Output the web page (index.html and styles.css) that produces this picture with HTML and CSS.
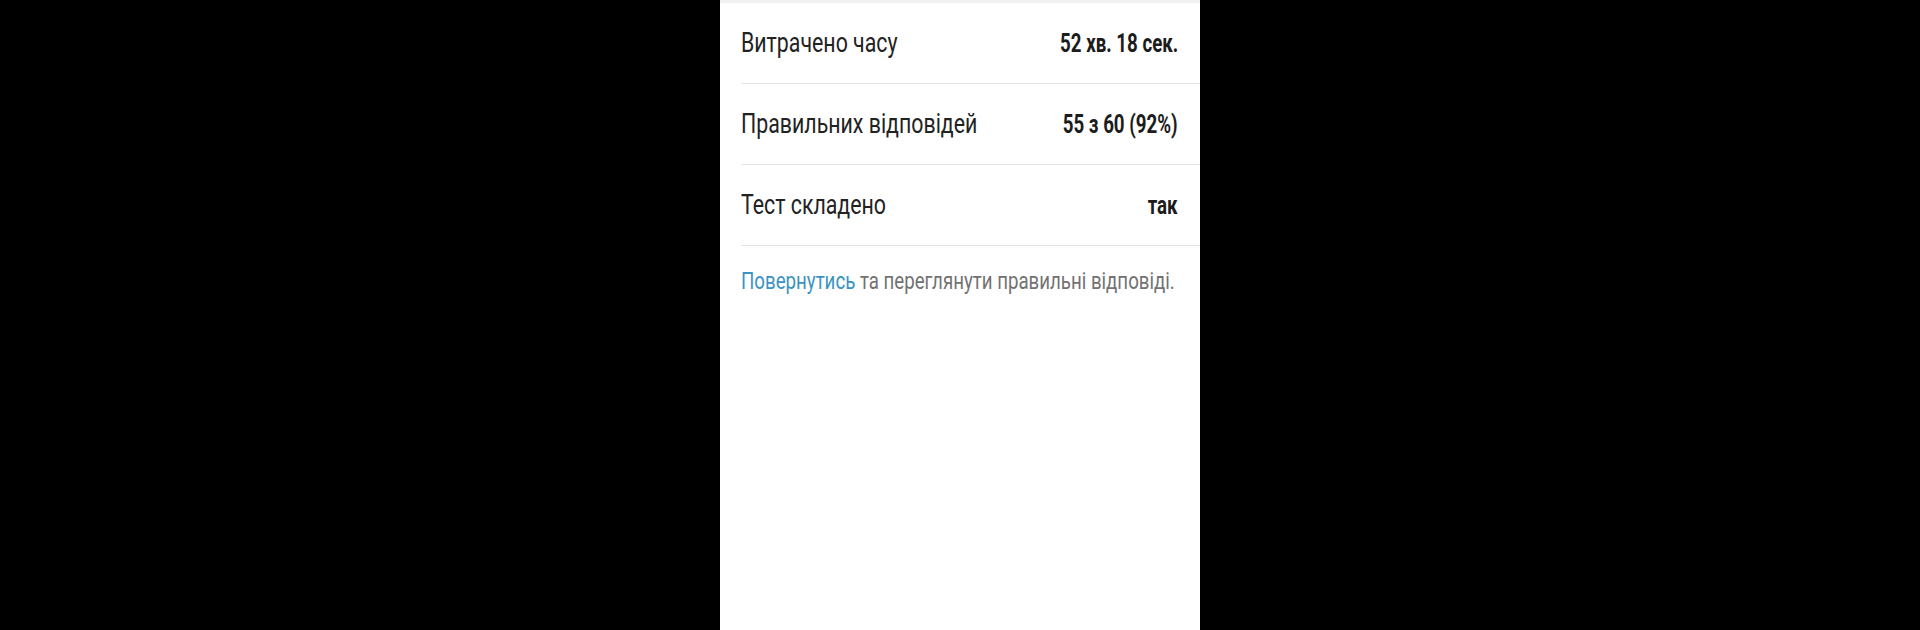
FILE: index.html
```html
<!DOCTYPE html>
<html lang="uk">
<head>
<meta charset="utf-8">
<title>Результати тесту</title>
<link rel="stylesheet" href="styles.css">
</head>
<body>
<div class="screen">
  <div class="panel">
    <div class="top-strip"></div>
    <div class="rows">
      <div class="row">
        <span class="label"><span class="sq">Витрачено часу</span></span>
        <span class="value"><span class="sq sq-r">52 хв. 18 сек.</span></span>
      </div>
      <div class="row">
        <span class="label"><span class="sq">Правильних відповідей</span></span>
        <span class="value"><span class="sq sq-r">55 з 60 (92%)</span></span>
      </div>
      <div class="row">
        <span class="label"><span class="sq">Тест складено</span></span>
        <span class="value"><span class="sq sq-r">так</span></span>
      </div>
    </div>
    <p class="note"><span class="sq"><a class="link" href="#">Повернутись</a> та переглянути правильні відповіді.</span></p>
  </div>
</div>
</body>
</html>
```
FILE: styles.css
```css
html, body {
  margin: 0;
  padding: 0;
  background: #000;
  height: 100%;
}
body {
  font-family: Roboto, "Noto Sans", "Liberation Sans", sans-serif;
}
.screen {
  display: flex;
  justify-content: center;
  height: 630px;
  overflow: hidden;
}
.panel {
  width: 480px;
  background: #fff;
  display: flex;
  flex-direction: column;
}
.top-strip {
  height: 3px;
  background: #f0f0f0;
}
.rows {
  padding-left: 21px;
}
.row {
  height: 80px;
  border-bottom: 1px solid #e4e4e4;
  display: flex;
  align-items: center;
  padding-right: 22px;
}
.label {
  flex: 0 0 auto;
  width: 300px;
  font-size: 27px;
  color: #222;
}
.value {
  flex: 1 1 auto;
  min-width: 0;
  display: flex;
  justify-content: flex-end;
  font-size: 26px;
  font-weight: 700;
  color: #1c1c1c;
}
.sq {
  display: inline-block;
  transform: scaleX(0.79);
  transform-origin: left center;
  white-space: nowrap;
}
.value .sq {
  transform: scaleX(0.72);
}
.note .sq {
  transform: scaleX(0.778);
}
.sq-r {
  transform-origin: right center;
}
.note {
  margin: 21px 0 0 21px;
  font-size: 24px;
  color: #727272;
}
.link {
  color: #3b93c3;
  text-decoration: none;
}
```
